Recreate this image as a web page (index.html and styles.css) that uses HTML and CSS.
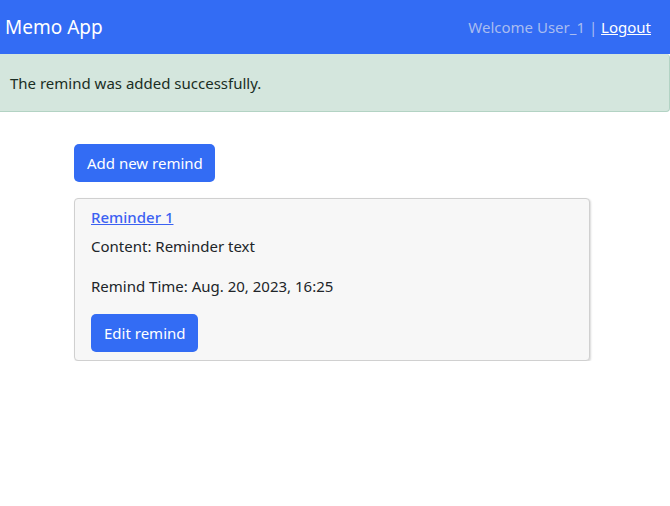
FILE: index.html
```html
<!DOCTYPE html>
<html>
<head>
<meta charset="utf-8">
<link rel="stylesheet" href="styles.css">
</head>
<body>
<nav class="navbar">
  <a class="brand" href="#">Memo App</a>
  <div class="user">Welcome User_1 | <a class="logout" href="#">Logout</a></div>
</nav>
<div class="alert">The remind was added successfully.</div>
<main class="container">
  <a class="btn" href="#">Add new remind</a>
  <div class="card">
    <a class="title" href="#">Reminder 1</a>
    <p class="line">Content: Reminder text</p>
    <p class="line">Remind Time: Aug. 20, 2023, 16:25</p>
    <a class="btn" href="#">Edit remind</a>
  </div>
</main>
</body>
</html>
```
FILE: styles.css
```css
* { box-sizing: border-box; }
body {
  margin: 0;
  font-family: "Noto Sans", "Open Sans", sans-serif;
  font-size: 15px;
  color: #212529;
  background: #fff;
}
.navbar {
  height: 54px;
  background: #336cf4;
  display: flex;
  align-items: center;
  justify-content: space-between;
  padding: 0 19px 0 5px;
}
.brand {
  color: #fff;
  font-size: 19px;
  text-decoration: none;
}
.user {
  color: #a9bcf0;
  font-size: 15px;
}
.logout { color: #fff; }
.alert {
  height: 58px;
  background: #d4e6dd;
  border: 1px solid #b3d3c4;
  border-left: none;
  border-top: none;
  border-radius: 0 4px 4px 0;
  color: #1a2e24;
  display: flex;
  align-items: center;
  padding-left: 10px;
  padding-top: 1px;
}
.container {
  padding: 32px 80px 0 74px;
  display: flex;
  flex-direction: column;
  align-items: flex-start;
  gap: 16px;
}
.btn {
  display: inline-block;
  background: #336cf4;
  color: #fff;
  text-decoration: none;
  border-radius: 5px;
  height: 38px;
  line-height: 38px;
  padding: 0 12px 0 13px;
}
.card {
  width: 516px;
  background: #f7f7f7;
  border: 1px solid #d0d0d0;
  border-radius: 4px;
  box-shadow: 1px 1px 2px rgba(0,0,0,0.15);
  padding: 7px 16px 8px 16px;
  display: flex;
  flex-direction: column;
  align-items: flex-start;
}
.title {
  color: #3c62f2;
  text-decoration: underline;
  line-height: 22px;
  font-weight: 500;
}
.line {
  margin: 0;
  line-height: 22px;
}
.title + .line { margin-top: 7px; }
.line + .line { margin-top: 18px; }
.card .btn { margin-top: 17px; }
```
